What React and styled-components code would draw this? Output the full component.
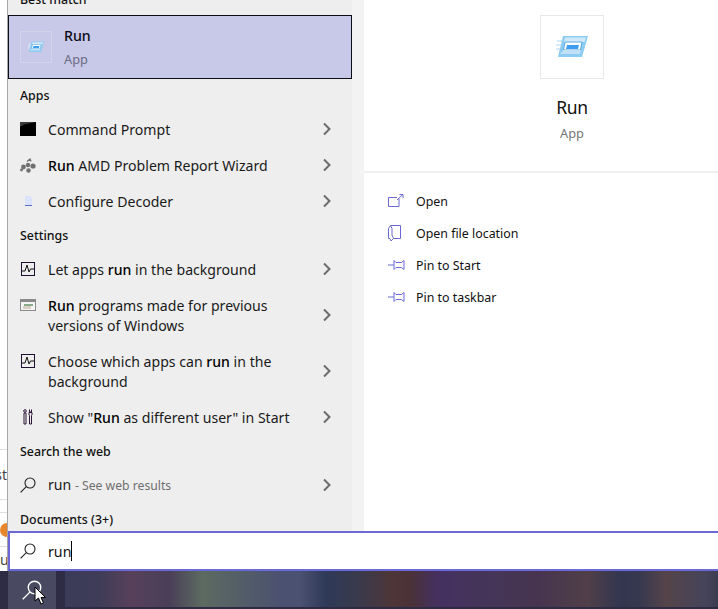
import React from "react";
import styled, { createGlobalStyle } from "styled-components";

const Global = createGlobalStyle`
  html, body { margin: 0; padding: 0; background: #fff; overflow: hidden; }
  body { font-family: "Noto Sans", "Open Sans", "Liberation Sans", sans-serif; color: #111; }
  * { box-sizing: border-box; }
`;

const Screen = styled.div`
  width: 718px; height: 609px; overflow: hidden;
  display: grid; grid-template-columns: 8px 1fr; grid-template-rows: 531px 40px 38px;
`;

/* the document behind the start menu */
const Backdrop = styled.div`
  grid-row: 1 / 3; grid-column: 1; background: #fff; border-right: 1px solid #a6a6a6;
  display: flex; flex-direction: column; overflow: hidden;
`;
const BackdropRow = styled.div`
  height: ${p => p.$h}px; flex: none; border-top: ${p => (p.$line ? "1px solid #dedede" : "none")};
  display: flex; align-items: center; justify-content: ${p => (p.$start ? "flex-start" : "flex-end")}; overflow: hidden;
  font-size: 14px; color: #444; white-space: nowrap;
`;
const OrangeDot = styled.span`
  width: 14px; height: 14px; border-radius: 50%; background: #e8862a; flex: none; margin-right: -7px;
`;

const Panels = styled.div`
  grid-row: 1; grid-column: 2; display: grid; grid-template-columns: 344px 12px 1fr; overflow: hidden;
`;
const Results = styled.div`
  background: #eeeeee; display: flex; flex-direction: column; margin-top: -17px;
`;
const Gutter = styled.div` background: #f3f3f3; `;

const GroupLabel = styled.div`
  height: 32px; flex: none; display: flex; align-items: center; padding-left: 12px;
  font-size: 12.4px; font-weight: 500; color: #111;
`;
const BestMatch = styled.div`
  height: 64px; flex: none; background: #c8c8e8; border: 1px solid #0c0c14;
  display: flex; align-items: center; padding-left: 11px; gap: 12px;
`;
const BestIcon = styled.div`
  width: 32px; height: 32px; border: 1px solid #d3d3ec; display: flex; align-items: center; justify-content: center;
`;
const BestText = styled.div` display: flex; flex-direction: column; gap: 3px; `;
const BestTitle = styled.div` font-size: 14.2px; font-weight: 500; line-height: 20px; color: #0b0b14; `;
const BestSub = styled.div` font-size: 12.8px; line-height: 20px; color: #6d6d80; `;

const Row = styled.div`
  height: ${p => (p.$tall ? 56 : 36)}px; flex: none; display: grid;
  grid-template-columns: 28px 1fr 29px; padding-left: 12px; align-items: center;
`;
const RowIcon = styled.div`
  width: 24px; height: 20px; display: flex; justify-content: flex-start; align-items: center;
  align-self: ${p => (p.$top ? "start" : "center")}; margin-top: ${p => (p.$top ? 8 : 0)}px;
`;
const RowText = styled.div`
  font-size: 14.1px; line-height: 20px; color: #1a1a1a; padding-top: 1px; b { font-weight: 500; color: #000; }
`;
const Muted = styled.span` font-size: 12.2px; color: #6e6e6e; `;
const Arrow = styled.div` display: flex; align-items: center; `;

const Details = styled.div` background: #fff; display: flex; flex-direction: column; overflow: hidden; `;
const Hero = styled.div`
  width: 416px; height: 173px; flex: none; border-bottom: 2px solid #f0f0f0;
  display: flex; flex-direction: column; align-items: center; padding-top: 15px;
`;
const HeroIcon = styled.div`
  width: 64px; height: 64px; border: 1px solid #e8e8e8; display: flex; align-items: center; justify-content: center;
`;
const HeroTitle = styled.div` margin-top: 14px; font-size: 17.5px; letter-spacing: -.3px; line-height: 28px; color: #111; `;
const HeroSub = styled.div` font-size: 12.8px; line-height: 20px; margin-top: 2px; color: #767676; `;
const Actions = styled.div` display: flex; flex-direction: column; padding: 12px 0 0 24px; `;
const Action = styled.div`
  height: 32px; display: grid; grid-template-columns: 28px 1fr; align-items: center;
  font-size: 12.4px; color: #111;
`;

const SearchBox = styled.div`
  grid-row: 2; grid-column: 2; background: #fff; border: 2px solid #6b69d6; border-right: none;
  display: flex; align-items: center; padding-left: 10px; gap: 12px; font-size: 14.2px; color: #111;
`;
const Typed = styled.div` display: flex; align-items: center; `;
const Caret = styled.span` width: 1px; height: 20px; background: #000; `;

const Taskbar = styled.div`
  grid-row: 3; grid-column: 1 / 3; background: #2d2c44; display: grid;
  grid-template-columns: 8px 48px 9px 1fr; padding-bottom: 2px;
`;
const StartSearch = styled.div`
  grid-column: 2; background: #4a4962; display: flex; align-items: center; justify-content: center; position: relative;
  margin-bottom: -2px;
`;
const Cursor = styled.svg` position: absolute; left: 26px; top: 15px; `;
const Apps = styled.div`
  grid-column: 4;
  background: linear-gradient(90deg, #3b3a58 0, #3e3c58 5%, #57405a 10%, #4a3f58 16%, #5c6a60 21%, #4b5170 33%, #4b5170 36%, #2e3a58 40%, #3a3a4c 45%, #4d3538 50%, #4a3238 53%, #453060 57%, #453558 65%, #463450 72%, #503f48 80%, #333650 85%, #37384f 88%, #554449 92%, #45445a 98%, #3d3c50 100%);
`;

const RunGlyph = ({ size }) => (
  <svg width={size} height={size * 0.75} viewBox="0 0 32 24">
    <path d="M1 6h8M0 10h7M-1 14h7" stroke="#d7ebfa" strokeWidth="2" />
    <path d="M7 1H32L26 22H2Z" fill="#8ccbf2" />
    <path d="M9 2.5H30L28.6 7H8Z" fill="#cfe9fb" />
    <path d="M9 7H26L24.5 15H7.5Z" fill="#fff" stroke="#5aa7e0" strokeWidth="1" />
    <path d="M7.5 15H25L24 19H4Z" fill="#bfe0f7" />
    <path d="M11 10h12l-1 4H10Z" fill="#3c9df0" />
  </svg>
);
const Terminal = () => (
  <svg width="16" height="14" viewBox="0 0 16 14">
    <rect width="16" height="14" fill="#000" />
    <path d="M0 0h16L4 2.5 0 5Z" fill="#3a3a3a" />
  </svg>
);
const AmdDots = () => (
  <svg width="16" height="15" viewBox="0 0 16 15" fill="#707070">
    <circle cx="3.500" cy="9" r="2.400" /><circle cx="8" cy="7" r="2.200" /><circle cx="13" cy="8" r="2.600" />
    <circle cx="8.500" cy="12.500" r="2.200" /><circle cx="1.500" cy="12" r="1.400" />
    <path d="M7 3.500 10 1 11 3.500" fill="none" stroke="#707070" strokeWidth="1.300" />
  </svg>
);
const DocWrap = styled.span` margin-left: 5px; display: flex; `;
const DocIcon = () => (
  <DocWrap>
    <svg width="7" height="10" viewBox="0 0 7 10">
      <path d="M0 0h5l2 2v8H0Z" fill="#dbe4fa" />
      <path d="M0 9.500h7" stroke="#5d6bc4" strokeWidth="1" />
    </svg>
  </DocWrap>
);
const PulseSvg = styled.svg` margin-left: 1px; `;
const Pulse = () => (
  <PulseSvg width="14" height="14" viewBox="0 0 14 14" fill="none">
    <rect x=".5" y=".5" width="13" height="13" stroke="#1d1030" />
    <path d="M1 9h3l2-6 2 7 1.500-3H13" stroke="#111" />
  </PulseSvg>
);
const WindowIcon = () => (
  <svg width="16" height="12" viewBox="0 0 16 12">
    <rect x=".5" y=".5" width="15" height="11" fill="#f5f5f5" stroke="#8a8a8a" />
    <rect x="1" y="1" width="14" height="2" fill="#8a8a8a" />
    <path d="M4 5h9v2H4Z" fill="#8aa88a" />
    <path d="M3 7h8v3H3Z" fill="#d8d2c4" />
  </svg>
);
const ToolsSvg = styled.svg` margin-left: 3px; `;
const Tools = () => (
  <ToolsSvg width="10" height="16" viewBox="0 0 10 16" fill="none" stroke="#2a1438" strokeWidth="1">
    <circle cx="2" cy="2" r="1.300" />
    <path d="M1 4h2v11H1Z" />
    <path d="M6.500.5v2.500h2V.5M6 3.500h3V6L8.500 6.500V15h-2V6.500L6 6Z" />
  </ToolsSvg>
);
const Loupe = ({ color = "#222", size = 16 }) => (
  <svg width={size} height={size} viewBox="0 0 16 16" fill="none" stroke={color} strokeWidth="1.100">
    <circle cx="10" cy="6" r="5" />
    <path d="M6.300 9.700.6 15.400" />
  </svg>
);
const Chevron = () => (
  <svg width="8" height="14" viewBox="0 0 8 14" fill="none" stroke="#6b6b6b" strokeWidth="2">
    <path d="M1 1.500 6.500 7 1 12.500" />
  </svg>
);
const OpenIcon = () => (
  <svg width="16" height="14" viewBox="0 0 16 14" fill="none" stroke="#6b69d6">
    <path d="M11 4.500V12.500H.5V3.500H9" /><path d="M9 6 14.500 .8M11.500 .5h3.500v3.500" />
  </svg>
);
const FolderIcon = () => (
  <svg width="14" height="17" viewBox="0 0 14 17" fill="none" stroke="#6b69d6">
    <path d="M2.500.5H12.500V13.500H5.500L3 16 2 13.500H.5V3.500Z" /><path d="M2.500.5 4 3.500V10L5.500 13.500" />
  </svg>
);
const PinIcon = () => (
  <svg width="17" height="10" viewBox="0 0 17 10" fill="none" stroke="#6b69d6">
    <path d="M0 5H6M6 .5 8 2.500H13.500L16 .5V9.500L13.500 7.500H8L6 9.500Z" />
  </svg>
);

const rows = {
  apps: [
    { icon: <Terminal />, text: <>Command Prompt</> },
    { icon: <AmdDots />, text: <><b>Run</b> AMD Problem Report Wizard</> },
    { icon: <DocIcon />, text: <>Configure Decoder</> },
  ],
  settings: [
    { icon: <Pulse />, text: <>Let apps <b>run</b> in the background</> },
    { icon: <WindowIcon />, text: <><b>Run</b> programs made for previous<br />versions of Windows</>, tall: true },
    { icon: <Pulse />, text: <>Choose which apps can <b>run</b> in the<br />background</>, tall: true },
    { icon: <Tools />, text: <>Show "<b>Run</b> as different user" in Start</> },
  ],
};

const ResultRow = ({ icon, text, tall }) => (
  <Row $tall={tall}>
    <RowIcon $top={tall}>{icon}</RowIcon>
    <RowText>{text}</RowText>
    <Arrow><Chevron /></Arrow>
  </Row>
);

export default function App() {
  return (
    <Screen>
      <Global />
      <Backdrop>
        <BackdropRow $h={449} />
        <BackdropRow $h={50} $line>st</BackdropRow>
        <BackdropRow $h={13} $line />
        <BackdropRow $h={34} $line><OrangeDot /></BackdropRow>
        <BackdropRow $h={25} $line $start>ur</BackdropRow>
      </Backdrop>
      <Panels>
        <Results>
          <GroupLabel>Best match</GroupLabel>
          <BestMatch>
            <BestIcon><RunGlyph size={16} /></BestIcon>
            <BestText>
              <BestTitle>Run</BestTitle>
              <BestSub>App</BestSub>
            </BestText>
          </BestMatch>
          <GroupLabel>Apps</GroupLabel>
          {rows.apps.map((r, i) => <ResultRow key={i} {...r} />)}
          <GroupLabel>Settings</GroupLabel>
          {rows.settings.map((r, i) => <ResultRow key={i} {...r} />)}
          <GroupLabel>Search the web</GroupLabel>
          <ResultRow icon={<Loupe />} text={<>run <Muted>- See web results</Muted></>} />
          <GroupLabel>Documents (3+)</GroupLabel>
        </Results>
        <Gutter />
        <Details>
          <Hero>
            <HeroIcon><RunGlyph size={32} /></HeroIcon>
            <HeroTitle>Run</HeroTitle>
            <HeroSub>App</HeroSub>
          </Hero>
          <Actions>
            <Action><OpenIcon /><span>Open</span></Action>
            <Action><FolderIcon /><span>Open file location</span></Action>
            <Action><PinIcon /><span>Pin to Start</span></Action>
            <Action><PinIcon /><span>Pin to taskbar</span></Action>
          </Actions>
        </Details>
      </Panels>
      <SearchBox>
        <Loupe />
        <Typed>run<Caret /></Typed>
      </SearchBox>
      <Taskbar>
        <StartSearch>
          <Loupe color="#fff" size={20} />
          <Cursor width="12" height="19" viewBox="0 0 12 19">
            <path d="M1 1V15L4.500 12 7 18 9.500 17 7 11.500H11.500Z" fill="#fff" stroke="#000" />
          </Cursor>
        </StartSearch>
        <Apps />
      </Taskbar>
    </Screen>
  );
}
